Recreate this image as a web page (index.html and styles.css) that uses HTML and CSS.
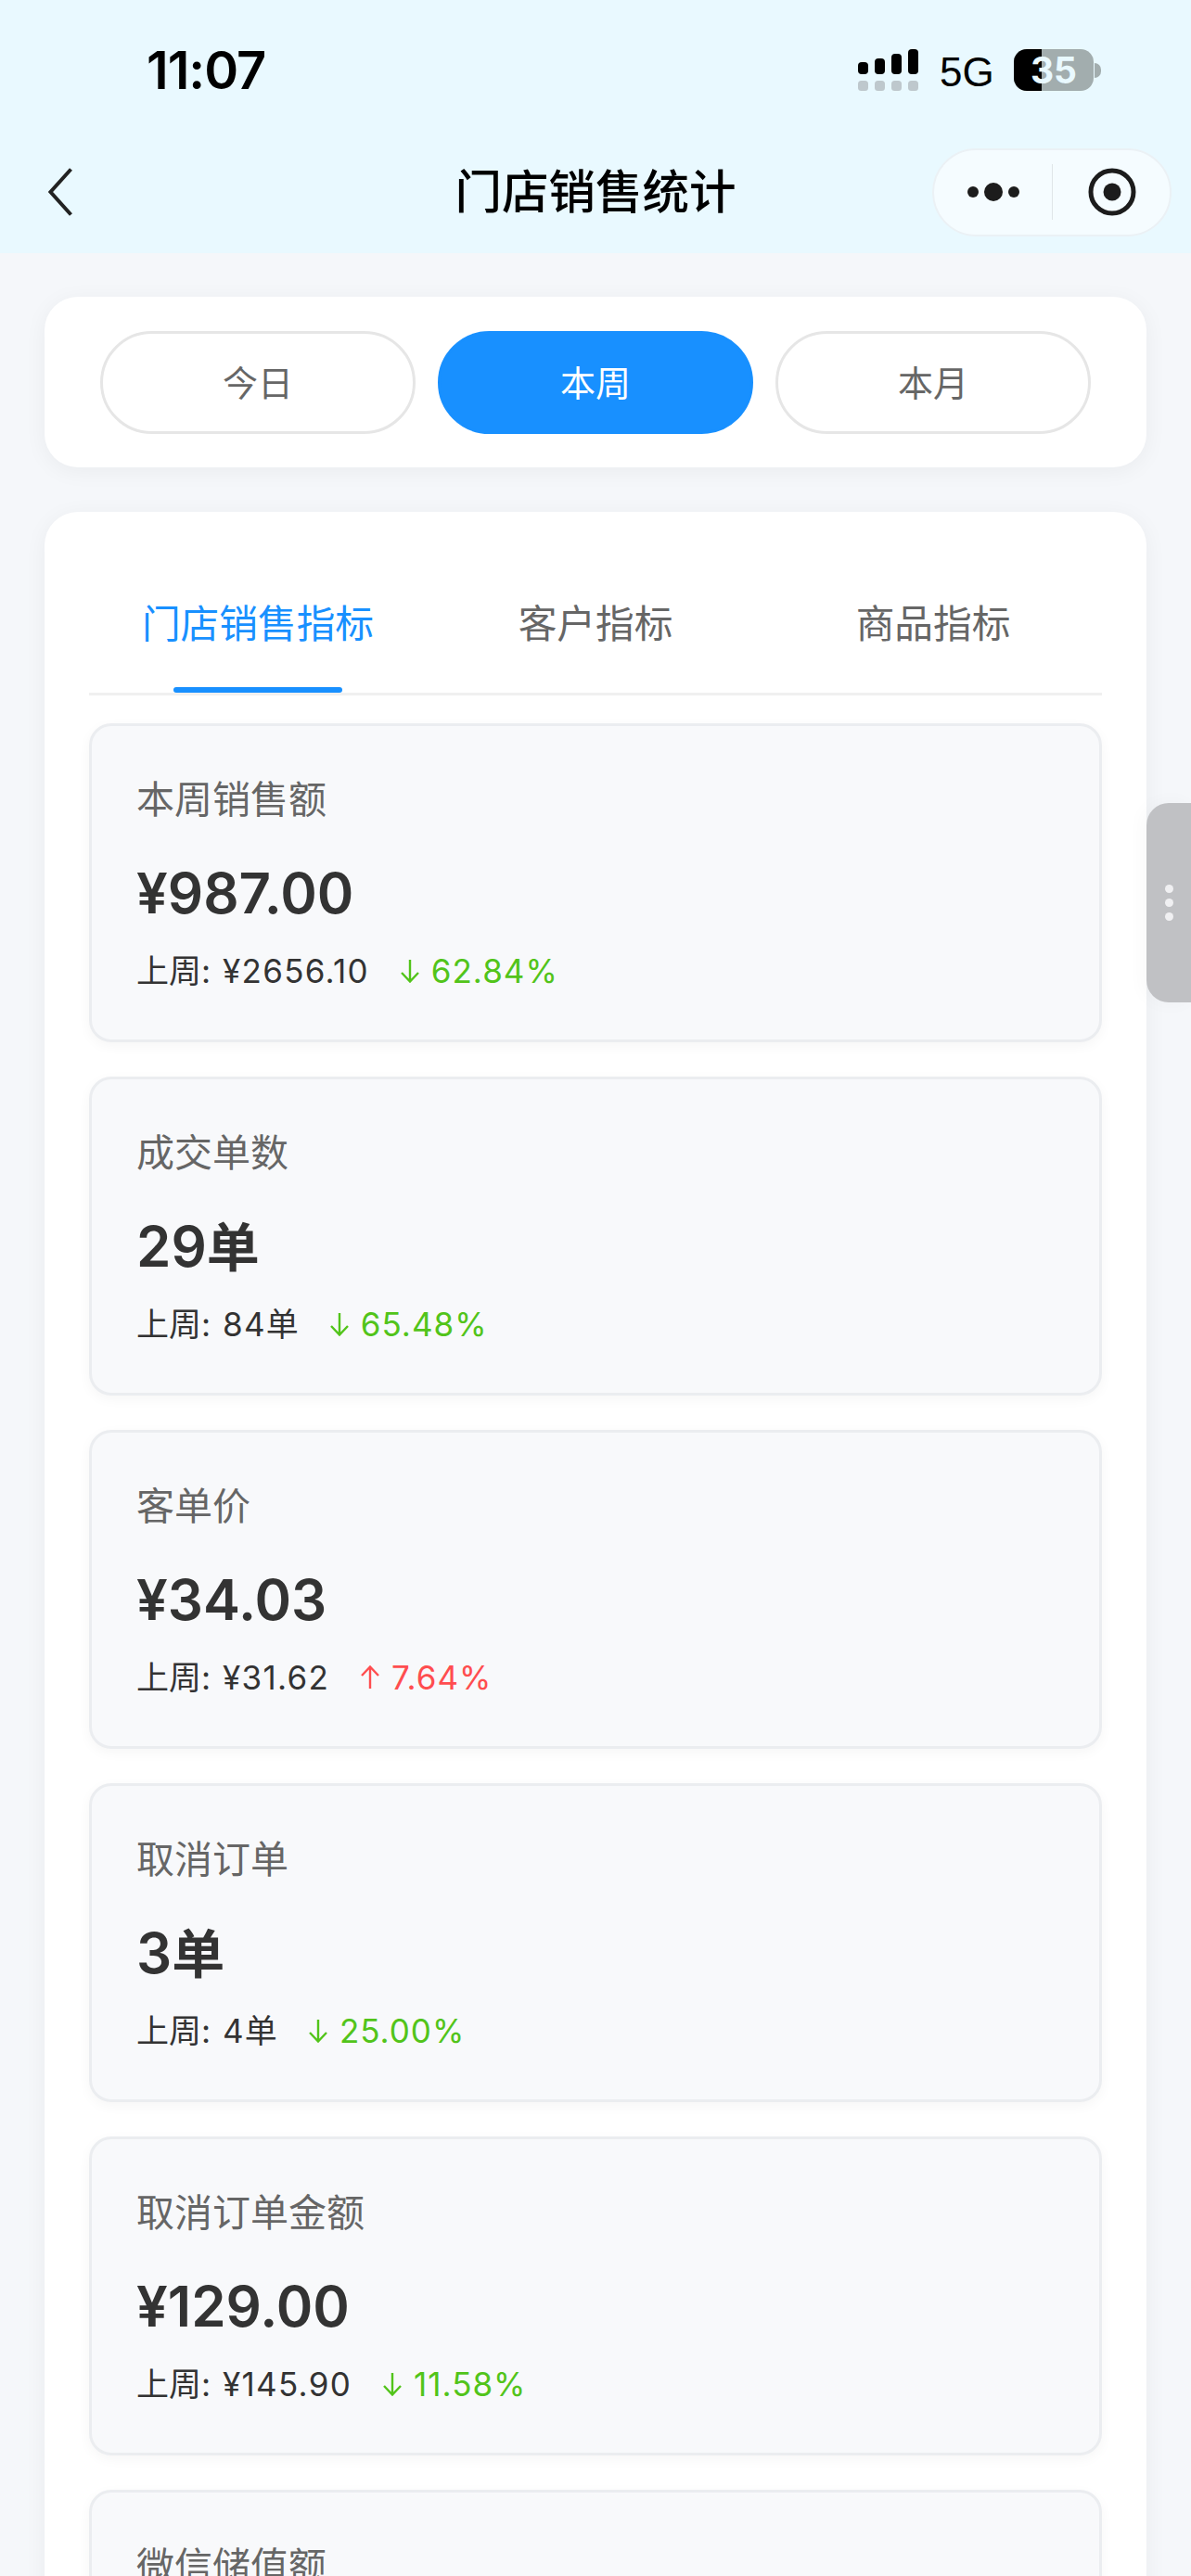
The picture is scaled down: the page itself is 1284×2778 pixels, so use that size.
FILE: index.html
```html
<!DOCTYPE html>
<html lang="zh-CN">
<head>
<meta charset="utf-8">
<title>门店销售统计</title>
<link rel="stylesheet" href="styles.css">
</head>
<body>
<div class="page">
  <header class="header">
    <div class="status">
      <span class="time">11:07</span>
      <div class="status-right">
        <svg class="signal" width="65" height="45" viewBox="0 0 65 45">
          <rect x="0" y="14" width="11" height="13" rx="4" fill="#000"/>
          <rect x="18" y="10" width="11" height="17" rx="4" fill="#000"/>
          <rect x="36" y="5" width="11" height="22" rx="4" fill="#000"/>
          <rect x="54" y="0" width="11" height="27" rx="4" fill="#000"/>
          <rect x="0" y="34" width="11" height="11" rx="3.5" fill="#bec8cd"/>
          <rect x="18" y="34" width="11" height="11" rx="3.5" fill="#bec8cd"/>
          <rect x="36" y="34" width="11" height="11" rx="3.5" fill="#bec8cd"/>
          <rect x="54" y="34" width="11" height="11" rx="3.5" fill="#bec8cd"/>
        </svg>
        <span class="net">5G</span>
        <div class="battery">
          <div class="battery-body"><div class="battery-fill"></div><span class="battery-num">35</span></div>
          <div class="battery-cap"></div>
        </div>
      </div>
    </div>
    <nav class="nav">
      <svg class="back" width="26" height="52" viewBox="0 0 26 52"><path d="M24.5 1.5 L2.5 26 L24.5 50.5" fill="none" stroke="#222" stroke-width="4"/></svg>
      <h1 class="title">门店销售统计</h1>
      <div class="capsule">
        <svg class="capsule-more" width="56" height="20" viewBox="0 0 56 20">
          <circle cx="6" cy="10" r="6" fill="#1c1c1c"/><circle cx="28" cy="10" r="10" fill="#1c1c1c"/><circle cx="50" cy="10" r="6" fill="#1c1c1c"/>
        </svg>
        <span class="capsule-line"></span>
        <svg class="capsule-target" width="52" height="52" viewBox="0 0 52 52">
          <circle cx="26" cy="26" r="23" fill="none" stroke="#1c1c1c" stroke-width="5"/><circle cx="26" cy="26" r="9.5" fill="#1c1c1c"/>
        </svg>
      </div>
    </nav>
  </header>

  <main class="main">
    <section class="panel periods">
      <div class="period">今日</div>
      <div class="period period-on">本周</div>
      <div class="period">本月</div>
    </section>

    <section class="panel stats">
      <div class="tabs">
        <div class="tab tab-on">门店销售指标</div>
        <div class="tab">客户指标</div>
        <div class="tab">商品指标</div>
      </div>
      <div class="list">
        <article class="metric">
          <div class="label">本周销售额</div>
          <div class="value">¥987.00</div>
          <div class="compare"><span>上周: <span class="num">¥2656.10</span></span><span class="delta down"><svg class="arrow" width="20" height="26" viewBox="0 0 20 26"><path d="M10 1 V24 M1 15 L10 24.5 L19 15" fill="none" stroke="currentColor" stroke-width="2.4"/></svg><span class="pct">62.84%</span></span></div>
        </article>
        <article class="metric">
          <div class="label">成交单数</div>
          <div class="value">29<span class="unit">单</span></div>
          <div class="compare"><span>上周: <span class="num">84</span>单</span><span class="delta down"><svg class="arrow" width="20" height="26" viewBox="0 0 20 26"><path d="M10 1 V24 M1 15 L10 24.5 L19 15" fill="none" stroke="currentColor" stroke-width="2.4"/></svg><span class="pct">65.48%</span></span></div>
        </article>
        <article class="metric">
          <div class="label">客单价</div>
          <div class="value">¥34.03</div>
          <div class="compare"><span>上周: <span class="num">¥31.62</span></span><span class="delta up"><svg class="arrow" width="20" height="26" viewBox="0 0 20 26"><path d="M10 25 V2 M1 11 L10 1.5 L19 11" fill="none" stroke="currentColor" stroke-width="2.4"/></svg><span class="pct">7.64%</span></span></div>
        </article>
        <article class="metric">
          <div class="label">取消订单</div>
          <div class="value">3<span class="unit">单</span></div>
          <div class="compare"><span>上周: <span class="num">4</span>单</span><span class="delta down"><svg class="arrow" width="20" height="26" viewBox="0 0 20 26"><path d="M10 1 V24 M1 15 L10 24.5 L19 15" fill="none" stroke="currentColor" stroke-width="2.4"/></svg><span class="pct">25.00%</span></span></div>
        </article>
        <article class="metric">
          <div class="label">取消订单金额</div>
          <div class="value">¥129.00</div>
          <div class="compare"><span>上周: <span class="num">¥145.90</span></span><span class="delta down"><svg class="arrow" width="20" height="26" viewBox="0 0 20 26"><path d="M10 1 V24 M1 15 L10 24.5 L19 15" fill="none" stroke="currentColor" stroke-width="2.4"/></svg><span class="pct">11.58%</span></span></div>
        </article>
        <article class="metric">
          <div class="label">微信储值额</div>
        </article>
      </div>
    </section>
  </main>

  <aside class="handle"><i></i><i></i><i></i></aside>
</div>
</body>
</html>
```

FILE: styles.css
```css
* { box-sizing: border-box; }
html, body { margin: 0; padding: 0; }
body {
  width: 1284px;
  height: 2778px;
  overflow: hidden;
  background: #f5f7fa;
  font-family: Inter, "Noto Sans CJK SC", sans-serif;
  color: #333;
}
.page { position: relative; width: 1284px; height: 2778px; overflow: hidden; }

.header { height: 273px; background: #e9f9ff; }
.status {
  height: 141px;
  padding: 53px 97px 0 158px;
  display: flex;
  justify-content: space-between;
  align-items: flex-start;
}
.time {
  font-size: 56px;
  line-height: 47px;
  font-weight: 600;
  color: #000;
  letter-spacing: -1px;
}
.status-right { display: flex; align-items: flex-start; height: 45px; }
.signal { display: block; }
.net {
  margin-left: 23px;
  width: 57px;
  font-family: "Liberation Sans", sans-serif;
  font-size: 44px;
  line-height: 50px;
  color: #000;
  white-space: nowrap;
}
.battery { margin-left: 23px; display: flex; align-items: center; height: 45px; }
.battery-body {
  position: relative;
  width: 86px;
  height: 45px;
  border-radius: 14px;
  background: #a2adae;
  overflow: hidden;
  display: flex;
  align-items: center;
  justify-content: center;
}
.battery-fill { position: absolute; left: 0; top: 0; bottom: 0; width: 30px; background: #000; }
.battery-num {
  position: relative;
  font-size: 39px;
  line-height: 45px;
  font-weight: 700;
  color: #e9f9ff;
}
.battery-cap {
  width: 7px;
  height: 16px;
  margin-left: 1px;
  border-radius: 0 8px 8px 0;
  background: #a2adae;
}

.nav {
  height: 132px;
  display: grid;
  grid-template-columns: 1fr auto 1fr;
  align-items: center;
  padding: 0 21px;
}
.back { display: block; margin-left: 31px; }
.title {
  margin: 0;
  font-size: 50.5px;
  line-height: 60px;
  font-weight: 500;
  color: #000;
}
.capsule {
  justify-self: end;
  width: 258px;
  height: 95px;
  border: 2px solid #ebf1f5;
  border-radius: 48px;
  background: #f5fcff;
  display: flex;
  align-items: center;
  padding-left: 36px;
}
.capsule-more { display: block; }
.capsule-line { width: 1px; height: 60px; margin-left: 35px; background: #dfe5e8; }
.capsule-target { display: block; margin-left: 38px; }

.main { padding: 47px 48px 0; display: flex; flex-direction: column; gap: 48px; }
.panel {
  background: #fff;
  border-radius: 36px;
  box-shadow: 0 4px 24px rgba(0, 0, 0, 0.05);
}
.periods { height: 184px; padding: 37px 60px; display: flex; gap: 24px; }
.period {
  width: 340px;
  height: 111px;
  border: 3px solid #e6e6e6;
  border-radius: 56px;
  color: #666;
  font-size: 38px;
  line-height: 107px;
  text-align: center;
}
.period-on { background: #1890ff; border-color: #1890ff; color: #fff; }

.stats { padding: 0 48px 40px; }
.tabs { display: flex; height: 198px; border-bottom: 3px solid #f0f0f0; }
.tab {
  position: relative;
  flex: 1;
  padding-top: 91px;
  font-size: 41.7px;
  line-height: 60px;
  text-align: center;
  color: #666;
}
.tab-on { color: #1890ff; }
.tab-on::after {
  content: "";
  position: absolute;
  left: 25%;
  right: 25%;
  bottom: 0;
  height: 6px;
  border-radius: 3px;
  background: #1890ff;
}

.list { margin-top: 30px; display: flex; flex-direction: column; gap: 37px; }
.metric {
  min-height: 344px;
  padding: 51px 48px 49px;
  border: 3px solid #ebedf0;
  border-radius: 24px;
  background: #f8f9fb;
  box-shadow: 0 4px 14px rgba(0, 0, 0, 0.04);
}
.label { font-size: 41px; line-height: 56px; color: #666; }
.value { margin-top: 33px; height: 80px; font-size: 60px; line-height: 80px; font-weight: 600; color: #333; }
.unit { font-size: 57px; line-height: 0; }
.compare { margin-top: 19px; display: flex; align-items: center; height: 50px; font-size: 35px; line-height: 50px; color: #333; word-spacing: 3px; }
.num { letter-spacing: 1.3px; }
.pct { letter-spacing: 1px; }
.delta { margin-left: 34px; display: flex; align-items: center; gap: 13px; }
.down { color: #52c41a; }
.up { color: #ff4d4f; }
.arrow { display: block; }

.handle {
  position: absolute;
  left: 1236px;
  top: 866px;
  width: 48px;
  height: 215px;
  border-radius: 24px 0 0 24px;
  background: #c0c1c4;
  box-shadow: -4px 0 20px rgba(0, 0, 0, 0.03);
  display: flex;
  flex-direction: column;
  align-items: center;
  justify-content: center;
  gap: 6px;
}
.handle i { width: 9px; height: 9px; border-radius: 50%; background: #f0f0f2; }
```
